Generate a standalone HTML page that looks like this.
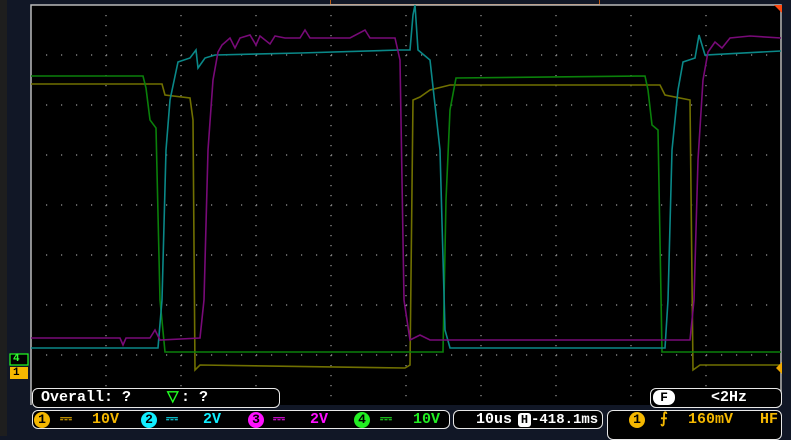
<!DOCTYPE html>
<html><head><meta charset="utf-8"><style>
*{margin:0;padding:0;box-sizing:border-box}
body{width:791px;height:436px;background:#111726;position:relative;overflow:hidden;font-family:"Liberation Mono",monospace;font-weight:bold}
.box{position:absolute;border:1.5px solid #e8e8e8;border-radius:6px;background:#000;color:#fff;font-size:15px}
.t{position:absolute;white-space:pre;font-size:15px;line-height:16px}
.c{position:absolute;width:16px;height:16px;border-radius:50%;color:#000;font-size:13px;line-height:16px;text-align:center}
</style></head><body>
<div style="position:absolute;left:0;top:0;width:7px;height:436px;background:#1e1e1e"></div>
<div style="position:absolute;left:330px;top:0;width:270px;height:5px;border:1px solid #c05a10;border-top:none"></div>
<svg style="position:absolute;left:0;top:0" width="791" height="436">
<rect x="31" y="5" width="751" height="400" fill="#000"/>
<g stroke="#999" stroke-width="1.2" stroke-dasharray="1.2 8.8">
<line x1="106" y1="15" x2="106" y2="405"/><line x1="181" y1="15" x2="181" y2="405"/><line x1="256" y1="15" x2="256" y2="405"/><line x1="331" y1="15" x2="331" y2="405"/><line x1="406" y1="15" x2="406" y2="405"/><line x1="481" y1="15" x2="481" y2="405"/><line x1="556" y1="15" x2="556" y2="405"/><line x1="631" y1="15" x2="631" y2="405"/><line x1="706" y1="15" x2="706" y2="405"/>
</g>
<g stroke="#999" stroke-width="1.2" stroke-dasharray="1.2 13.8">
<line x1="46" y1="55" x2="781" y2="55"/><line x1="46" y1="105" x2="781" y2="105"/><line x1="46" y1="155" x2="781" y2="155"/><line x1="46" y1="205" x2="781" y2="205"/><line x1="46" y1="255" x2="781" y2="255"/><line x1="46" y1="305" x2="781" y2="305"/><line x1="46" y1="355" x2="781" y2="355"/>
</g>
<g fill="none" stroke="#bbb" stroke-width="1.5">
<path d="M31 405V5H781V405"/>
</g>
<g fill="none" stroke-width="1.6">
<polyline stroke="#707000" points="31,84 162,84 165,95 190,98 193,120 195,370 200,365 405,368 410,365 413,100 420,97 430,90 450,85 660,85 665,95 690,100 693,370 700,365 781,365"/>
<polyline stroke="#0a800a" points="31,76 143,76 146,88 150,120 156,128 160,300 165,352 443,352 446,200 450,110 456,78 645,76 648,90 652,125 658,130 662,352 781,352"/>
<polyline stroke="#0a8888" points="31,348 158,348 162,300 166,150 170,100 178,62 190,58 196,50 198,68 205,58 215,55 300,53 400,50 410,50 413,15 415,5 418,50 430,60 440,150 445,330 450,348 665,348 668,300 672,150 678,90 683,62 695,58 699,35 705,55 781,51"/>
<polyline stroke="#780a78" points="31,338 120,338 123,345 126,338 150,338 155,330 160,340 200,338 204,300 208,150 213,80 218,52 222,45 230,38 235,48 240,38 250,35 256,45 260,36 270,44 275,36 285,38 300,38 305,30 310,38 330,38 350,38 365,30 370,38 395,38 400,60 404,300 410,340 420,335 430,340 690,340 694,300 698,160 703,80 708,52 715,42 722,48 730,38 750,36 781,38"/>
</g>
<path d="M774 5H782V13Z" fill="#ff4a10"/>
<path d="M782 362L776 368L782 374Z" fill="#f0a800"/>
<rect x="10" y="354" width="18" height="11" fill="#000" stroke="#2f2" stroke-width="1.2"/>
<rect x="10" y="367" width="18" height="12" fill="#f5b800"/>
</svg>
<div class="t" style="left:13px;top:353px;font-size:11px;line-height:12px;color:#3f3">4</div>
<div class="t" style="left:13px;top:367px;font-size:11px;line-height:12px;color:#000">1</div>
<div class="box" style="left:32px;top:388px;width:248px;height:20px"><span class="t" style="left:8px;top:1px">Overall: ?</span><span class="t" style="left:134px;top:1px;color:#2f2">▽</span><span class="t" style="left:148px;top:1px">: ?</span></div>
<div class="box" style="left:650px;top:388px;width:132px;height:20px"><span style="position:absolute;left:2px;top:1px;width:22px;height:15px;border-radius:7px;background:#fff;color:#000;text-align:center;font-size:13px;line-height:15px">F</span><span class="t" style="left:60px;top:1px">&lt;2Hz</span></div>
<div class="box" style="left:32px;top:410px;width:418px;height:19px">
<span class="c" style="left:1px;top:1px;background:#f5b800">1</span><span class="t" style="left:27px;top:1px;color:#f5b800">⎓</span><span class="t" style="left:59px;top:1px;color:#f5b800">10V</span>
<span class="c" style="left:108px;top:1px;background:#1ef">2</span><span class="t" style="left:133px;top:1px;color:#1ef">⎓</span><span class="t" style="left:170px;top:1px;color:#1ef">2V</span>
<span class="c" style="left:215px;top:1px;background:#f1f">3</span><span class="t" style="left:240px;top:1px;color:#f1f">⎓</span><span class="t" style="left:277px;top:1px;color:#f1f">2V</span>
<span class="c" style="left:321px;top:1px;background:#2e2">4</span><span class="t" style="left:347px;top:1px;color:#2e2">⎓</span><span class="t" style="left:380px;top:1px;color:#2e2">10V</span></div>
<div class="box" style="left:453px;top:410px;width:150px;height:19px"><span class="t" style="left:22px;top:1px">10us</span><span style="position:absolute;left:64px;top:2px;width:13px;height:14px;border-radius:3px;background:#fff;color:#000;font-size:12px;line-height:14px;text-align:center">H</span><span class="t" style="left:77px;top:1px;font-size:14px">-418.1ms</span></div>
<div class="box" style="left:607px;top:410px;width:175px;height:30px"><span class="c" style="left:21px;top:1px;background:#f5b800">1</span><span class="t" style="left:52px;top:1px;color:#f5b800">⨍</span><span class="t" style="left:80px;top:1px;color:#f5b800">160mV</span><span class="t" style="left:152px;top:1px;color:#f5b800">HF</span></div>
</body></html>
